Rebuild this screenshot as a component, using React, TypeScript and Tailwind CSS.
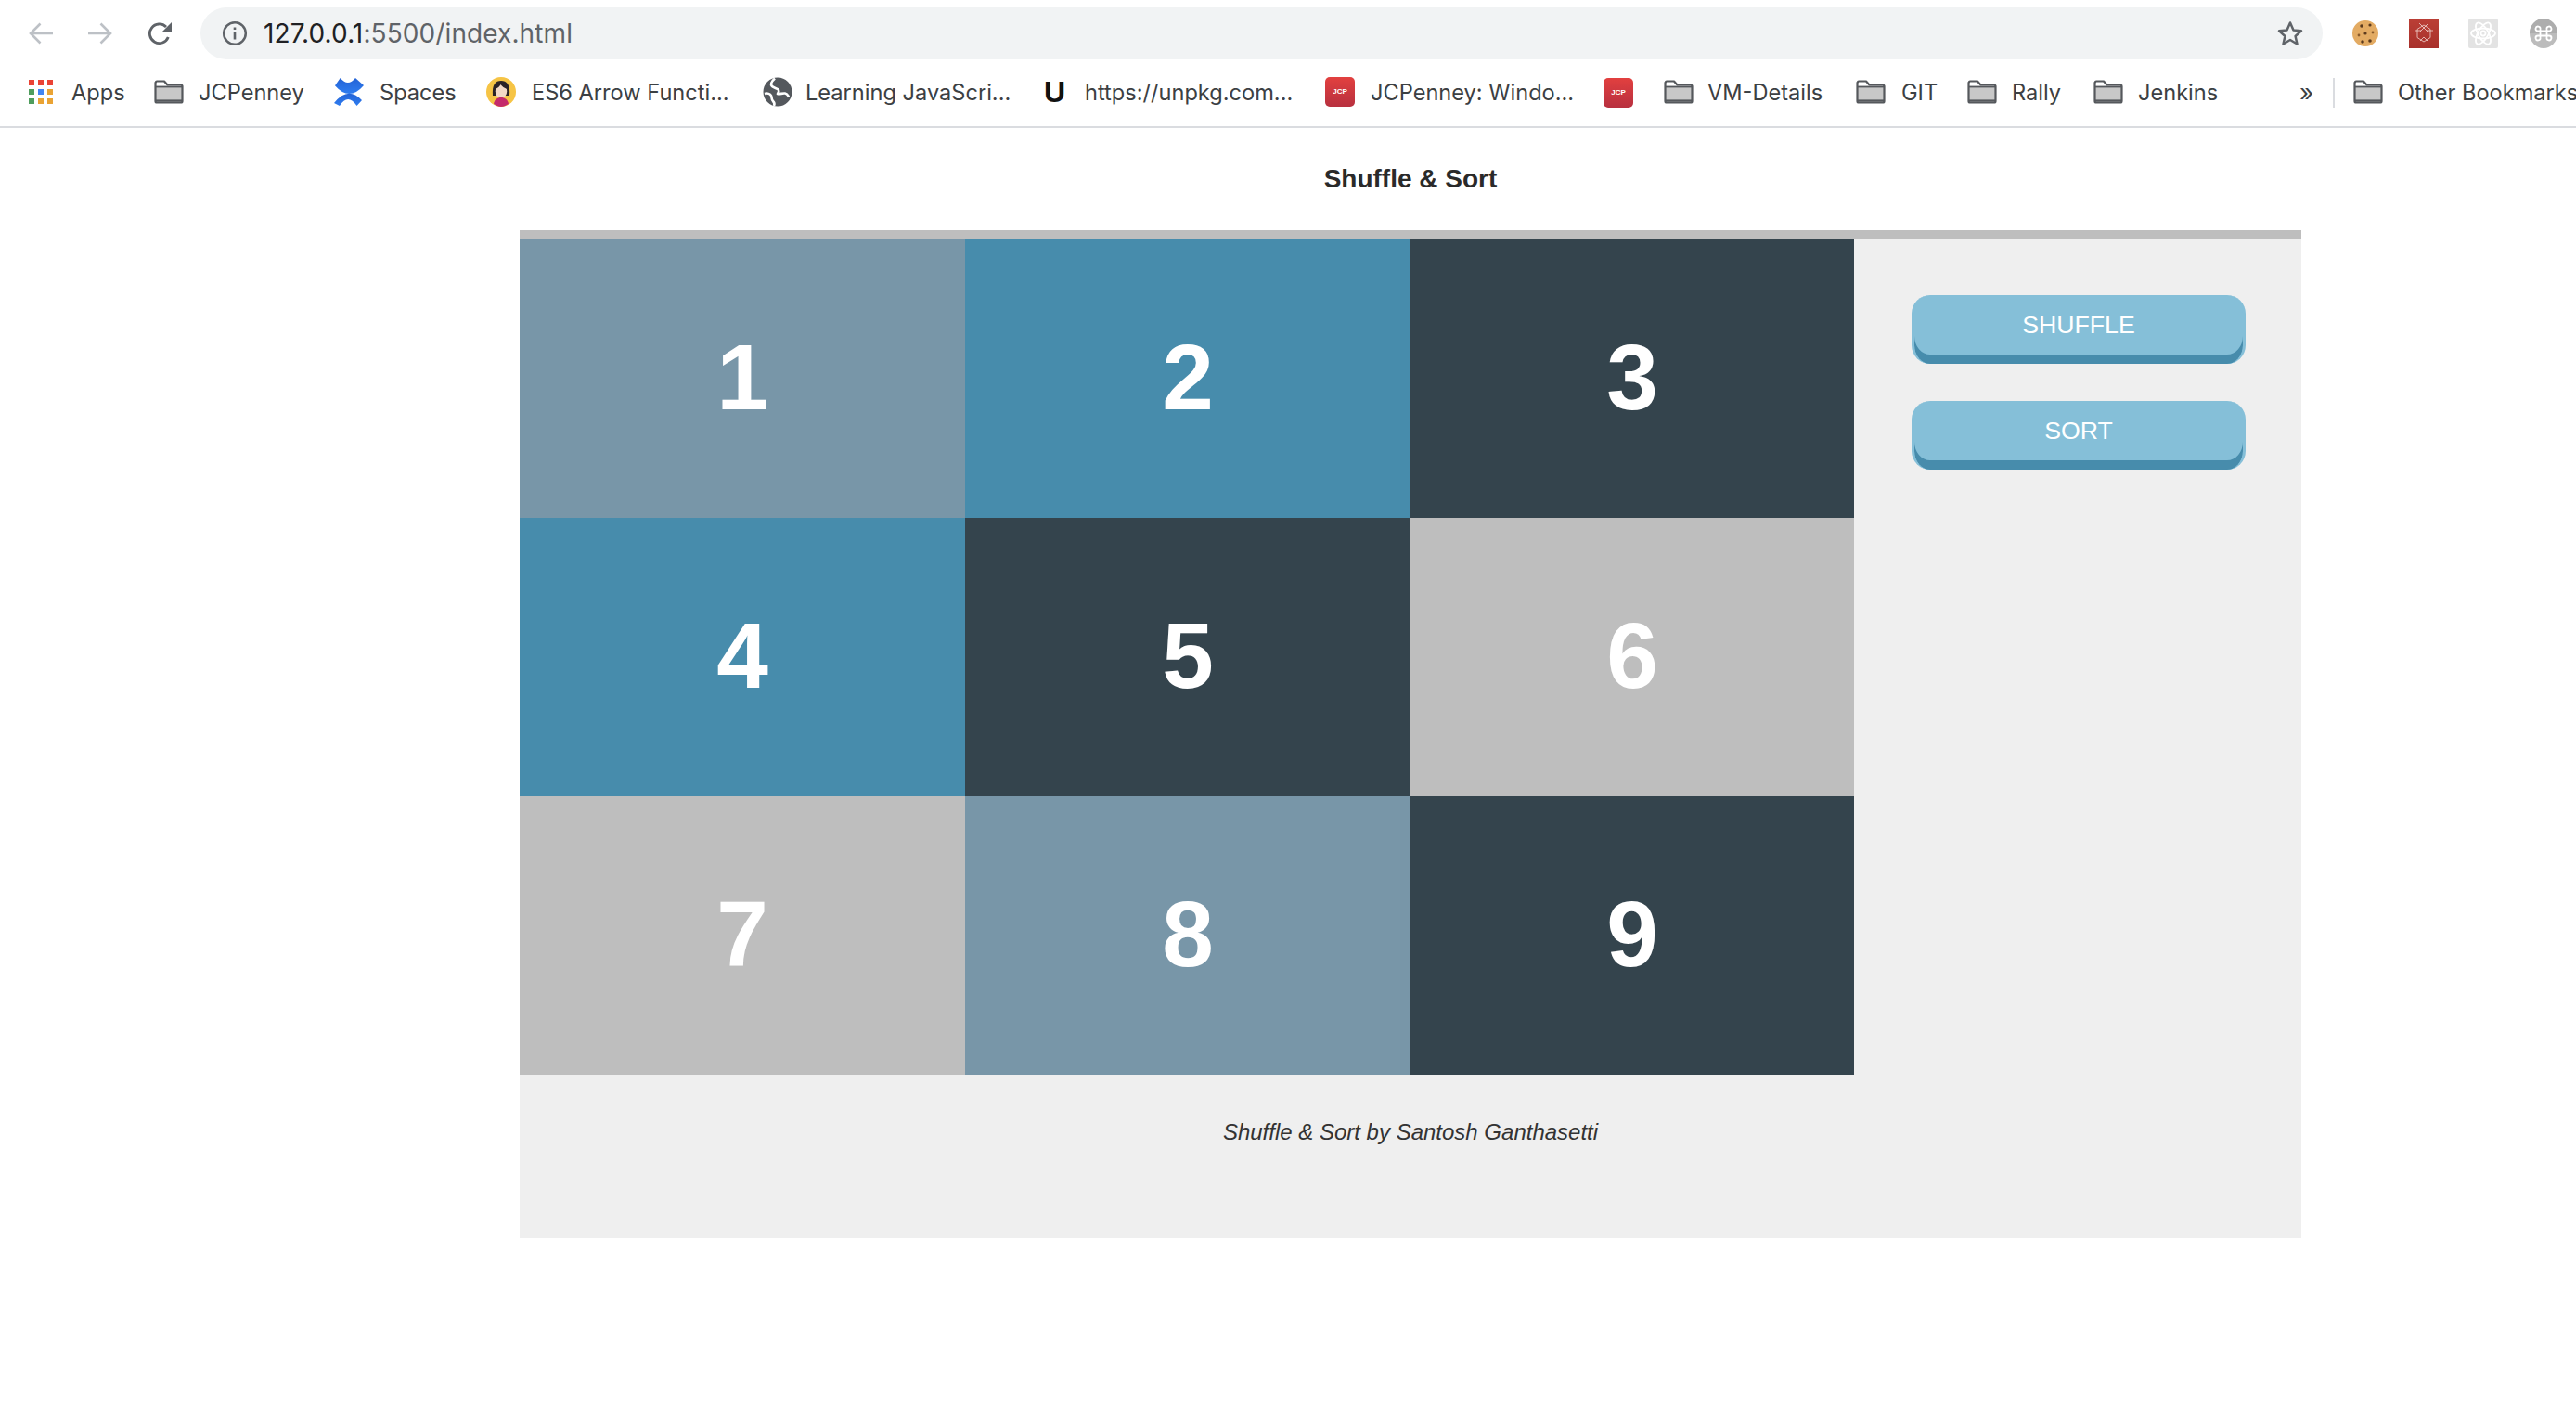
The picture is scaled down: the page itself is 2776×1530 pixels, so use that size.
import React from 'react';

const cells = [
  { n: 1, bg: 'bg-[#7896a8]' },
  { n: 2, bg: 'bg-[#478cac]' },
  { n: 3, bg: 'bg-[#34444d]' },
  { n: 4, bg: 'bg-[#478cac]' },
  { n: 5, bg: 'bg-[#34444d]' },
  { n: 6, bg: 'bg-[#bebebe]' },
  { n: 7, bg: 'bg-[#bebebe]' },
  { n: 8, bg: 'bg-[#7896a8]' },
  { n: 9, bg: 'bg-[#34444d]' },
];

const AppsIcon = () => (
  <svg width="26" height="26" viewBox="0 0 26 26" className="shrink-0">
    {[
      [0, 0, '#ea4335'], [10, 0, '#ea4335'], [20, 0, '#ea4335'],
      [0, 10, '#4f9d5d'], [10, 10, '#4285f4'], [20, 10, '#eaa334'],
      [0, 20, '#4f9d5d'], [10, 20, '#eaa334'], [20, 20, '#eaa334'],
    ].map(([x, y, c]) => (
      <rect key={`${x}-${y}`} x={x as number} y={y as number} width="6" height="6" fill={c as string} />
    ))}
  </svg>
);

const FolderIcon = () => (
  <svg width="32" height="26" viewBox="0 0 32 26" className="shrink-0">
    <path d="M2 8h28v16H2z" fill="#c8c8c8" />
    <path d="M2 2.500a1 1 0 0 1 1-1h8l3.500 4H29a1.500 1.500 0 0 1 1.500 1.500v16a1.500 1.500 0 0 1-1.500 1.500H3A1.500 1.500 0 0 1 1.500 23V3z" fill="none" stroke="#55585c" strokeWidth="2.200" strokeLinejoin="round" />
    <path d="M2 7.500h28" stroke="#55585c" strokeWidth="1.800" />
    <path d="M2 22.500h28" stroke="#55585c" strokeWidth="2.200" />
  </svg>
);

const ConfluenceIcon = () => (
  <svg width="32" height="32" viewBox="0 0 32 32" className="shrink-0">
    <defs>
      <linearGradient id="cf" x1="0" y1="0" x2="0" y2="1">
        <stop offset="0" stopColor="#2463d6" />
        <stop offset="1" stopColor="#2f7df0" />
      </linearGradient>
    </defs>
    <path d="M1 9.300L6.700 1Q15 11 23 1L32 9Q16.500 27 1 9.300z" fill="url(#cf)" />
    <path d="M0 28Q15 9 30 25L24.500 31Q15 17 6 31z" fill="url(#cf)" />
  </svg>
);

const AvatarIcon = () => (
  <svg width="32" height="32" viewBox="0 0 32 32" className="shrink-0">
    <circle cx="16" cy="16" r="16" fill="#f6c445" />
    <path d="M7 20C6 8 10 4 16 4s10 4 9 16z" fill="#2b2326" />
    <ellipse cx="16" cy="15.500" rx="6.200" ry="7.500" fill="#f3d9c6" />
    <path d="M9.500 13c3-1 5-3 6-5 1.500 2 4 4 7 5-1-5-3-7-6.500-7s-6 2-6.500 7z" fill="#2b2326" />
    <path d="M8 29c1-5 4-7 8-7s7 2 8 7c-2 1.500-5 3-8 3s-6-1.500-8-3z" fill="#c42a6b" />
  </svg>
);

const GlobeIcon = () => (
  <svg width="32" height="32" viewBox="0 0 32 32" className="shrink-0">
    <circle cx="16" cy="16" r="15.500" fill="#54585d" />
    <path d="M13 1.500C9 5 8 8 10 10s6 2 7 4-1 3-1 4c2 1 5-1 8-.500s3 2.500 4 4" fill="none" stroke="#fff" strokeWidth="2.600" />
    <path d="M2 18c3-1 6 0 7 2s0 4 2 6 2 3 1 5" fill="none" stroke="#fff" strokeWidth="2.600" />
  </svg>
);

const JcpIcon = () => (
  <div className="w-[32px] h-[32px] shrink-0 rounded-[5px] bg-gradient-to-b from-[#e2403f] to-[#b8303f] flex items-center justify-center text-white text-[8px] font-bold font-['Liberation_Sans',sans-serif]">
    JCP
  </div>
);

const UIcon = () => (
  <div className="w-[22px] shrink-0 text-center text-[#111] text-[32px] leading-none font-bold font-['Liberation_Sans',sans-serif]">U</div>
);

const bookmarks: { icon: React.ReactNode; label: string; w: string; gap: string }[] = [
  { icon: <AppsIcon />, label: 'Apps', w: 'w-[135px]', gap: 'gap-[20px]' },
  { icon: <FolderIcon />, label: 'JCPenney', w: 'w-[194px]', gap: 'gap-[16px]' },
  { icon: <ConfluenceIcon />, label: 'Spaces', w: 'w-[164px]', gap: 'gap-[17px]' },
  { icon: <AvatarIcon />, label: 'ES6 Arrow Functi...', w: 'w-[298px]', gap: 'gap-[17px]' },
  { icon: <GlobeIcon />, label: 'Learning JavaScri...', w: 'w-[303px]', gap: 'gap-[14px]' },
  { icon: <UIcon />, label: 'https://unpkg.com...', w: 'w-[303px]', gap: 'gap-[22px]' },
  { icon: <JcpIcon />, label: 'JCPenney: Windo...', w: 'w-[300px]', gap: 'gap-[17px]' },
  { icon: <JcpIcon />, label: '', w: 'w-[65px]', gap: 'gap-0' },
  { icon: <FolderIcon />, label: 'VM-Details', w: 'w-[207px]', gap: 'gap-[15px]' },
  { icon: <FolderIcon />, label: 'GIT', w: 'w-[120px]', gap: 'gap-[17px]' },
  { icon: <FolderIcon />, label: 'Rally', w: 'w-[136px]', gap: 'gap-[16px]' },
  { icon: <FolderIcon />, label: 'Jenkins', w: 'w-[222px]', gap: 'gap-[16px]' },
];

const BrowserChrome = () => (
  <div className="border-b-2 border-[#dadce0] h-[138px] overflow-hidden">
    {/* toolbar */}
    <div className="h-[72px] pt-[8px] flex items-start">
      <div className="w-[216px] h-[56px] pl-[31px] flex items-center gap-[38px] shrink-0">
        <svg width="26" height="24" viewBox="0 0 26 24" fill="none" stroke="#bdc1c6" strokeWidth="2.600">
          <path d="M26 12H2M12.500 1.500L2 12l10.500 10.500" />
        </svg>
        <svg width="26" height="24" viewBox="0 0 26 24" fill="none" stroke="#bdc1c6" strokeWidth="2.600">
          <path d="M0 12h24M13.500 1.500L24 12 13.500 22.500" />
        </svg>
        <svg width="26" height="26" viewBox="0 0 26 26" className="shrink-0">
          <path d="M22.300 17A10.300 10.300 0 1 1 20 6" fill="none" stroke="#5f6368" strokeWidth="2.800" />
          <path d="M26 1v11H15z" fill="#5f6368" />
        </svg>
      </div>
      <div className="w-[2287px] h-[56px] rounded-full bg-[#f1f3f4] flex items-center pl-[23px] pr-[20px] shrink-0">
        <svg width="28" height="28" viewBox="0 0 28 28" className="shrink-0">
          <circle cx="14" cy="14" r="11.800" fill="none" stroke="#5f6368" strokeWidth="2.500" />
          <path d="M12.700 12.500h2.600v8h-2.600zM12.700 7.500h2.600v2.600h-2.600z" fill="#5f6368" />
        </svg>
        <div className="ml-[17px] text-[28px] tracking-[0.1px] font-['Inter',sans-serif] text-[#5f6368] whitespace-nowrap">
          <span className="text-[#202124]">127.0.0.1</span>:5500/index.html
        </div>
        <svg width="30" height="30" viewBox="0 0 30 30" className="ml-auto shrink-0">
          <path d="M15 3.500l3.500 8 8.500.800-6.400 5.700 1.900 8.500L15 22l-7.500 4.500 1.900-8.500L3 12.300l8.500-.800z" fill="none" stroke="#5f6368" strokeWidth="2.500" strokeLinejoin="round" />
        </svg>
      </div>
      {/* extensions */}
      <div className="h-[56px] pl-[31px] flex items-center shrink-0">
        <svg width="30" height="30" viewBox="0 0 30 30" className="shrink-0">
          <circle cx="15" cy="15" r="14" fill="#e3ab63" />
          <circle cx="11" cy="7" r="1.800" fill="#5b3a1e" />
          <circle cx="20" cy="6" r="1.600" fill="#5b3a1e" />
          <circle cx="23" cy="14" r="1.400" fill="#8a5a2a" />
          <circle cx="15" cy="15" r="1.600" fill="#5b3a1e" />
          <circle cx="8" cy="17" r="1.400" fill="#8a5a2a" />
          <circle cx="12" cy="24" r="1.800" fill="#5b3a1e" />
          <circle cx="20" cy="23" r="1.800" fill="#5b3a1e" />
        </svg>
        <svg width="32" height="32" viewBox="0 0 32 32" className="ml-[32px] shrink-0">
          <defs>
            <linearGradient id="rd" x1="0" y1="0" x2="0" y2="1">
              <stop offset="0" stopColor="#bb3f36" />
              <stop offset="1" stopColor="#a8302b" />
            </linearGradient>
          </defs>
          <rect width="32" height="32" fill="url(#rd)" />
          <path d="M16 7l7 4.500v9L16 25l-7-4.500v-9zM11 5l10 10M21 5L11 15M6 13h7M26 13h-7M12 24l4-4 4 4" fill="none" stroke="#f0d5d0" strokeWidth="0.800" />
        </svg>
        <svg width="32" height="32" viewBox="0 0 32 32" className="ml-[32px] shrink-0">
          <rect width="32" height="32" rx="2" fill="#e3e3e3" />
          <g fill="none" stroke="#fff" strokeWidth="1.800">
            <ellipse cx="16" cy="16" rx="13" ry="5.500" />
            <ellipse cx="16" cy="16" rx="13" ry="5.500" transform="rotate(60 16 16)" />
            <ellipse cx="16" cy="16" rx="13" ry="5.500" transform="rotate(120 16 16)" />
            <circle cx="16" cy="16" r="2.500" />
          </g>
        </svg>
        <svg width="30" height="32" viewBox="0 0 30 32" className="ml-[34px] shrink-0">
          <ellipse cx="15" cy="16" rx="15" ry="16" fill="#bcbcbc" />
          <path d="M0 16a15 16 0 0 1 30 0z" fill="#adadad" />
          <path d="M11.500 11.500v9M18.500 11.500v9M8.500 13.500h13M8.500 18.500h13M11.500 11.500a2.500 2.500 0 1 0-3 2M18.500 11.500a2.500 2.500 0 1 1 3 2M11.500 20.500a2.500 2.500 0 1 1-3-2M18.500 20.500a2.500 2.500 0 1 0 3-2" fill="none" stroke="#fff" strokeWidth="1.800" />
        </svg>
      </div>
    </div>
    {/* bookmarks bar */}
    <div className="h-[64px] pb-[9px] pl-[31px] flex items-center text-[23.6px] font-['Inter',sans-serif] text-[#3c4043] whitespace-nowrap">
      {bookmarks.map((b, i) => (
        <div key={i} className={`flex items-center shrink-0 ${b.w} ${b.gap}`}>
          {b.icon}
          {b.label && <span>{b.label}</span>}
        </div>
      ))}
      <div className="w-[36px] shrink-0 text-[26px] leading-none">»</div>
      <div className="w-[2px] h-[32px] bg-[#dadce0] shrink-0 mr-[20px]" />
      <div className="flex items-center gap-[16px] shrink-0">
        <FolderIcon />
        <span>Other Bookmarks</span>
      </div>
    </div>
  </div>
);

const ActionButton = ({ label }: { label: string }) => (
  <button className="w-[360px] h-[74px] pb-[10px] rounded-[20px] bg-[#85bfd8] border-x-[3px] border-[#85bfd8] shadow-[inset_0_-10px_0_#478cac] text-white text-[26.67px] font-['Liberation_Sans',sans-serif]">
    {label}
  </button>
);

export default function App() {
  return (
    <div className="min-h-[1530px] bg-white overflow-hidden font-['Liberation_Sans',sans-serif]">
      <BrowserChrome />

      <h1 className="h-[110px] pt-[38px] w-[1920px] ml-[560px] text-center text-[#2a2a2a] text-[28px] leading-[34px] font-bold">
        Shuffle &amp; Sort
      </h1>

      <div className="w-[1920px] ml-[560px] bg-[#efefef] border-t-[10px] border-[#bebebe]">
        <div className="flex">
          <div className="w-[1438px] grid grid-cols-[480px_480px_478px] shrink-0">
            {cells.map((c) => (
              <div key={c.n} className={`${c.bg} h-[300px] pb-[4px] flex items-center justify-center text-white text-[100px] font-bold`}>
                {c.n}
              </div>
            ))}
          </div>
          <div className="pl-[62px] pt-[60px] flex flex-col gap-[40px]">
            <ActionButton label="SHUFFLE" />
            <ActionButton label="SORT" />
          </div>
        </div>
        <div className="h-[176px] pt-[46px] text-center italic text-[#333] text-[24px] leading-[32px]">
          Shuffle &amp; Sort by Santosh Ganthasetti
        </div>
      </div>
    </div>
  );
}
